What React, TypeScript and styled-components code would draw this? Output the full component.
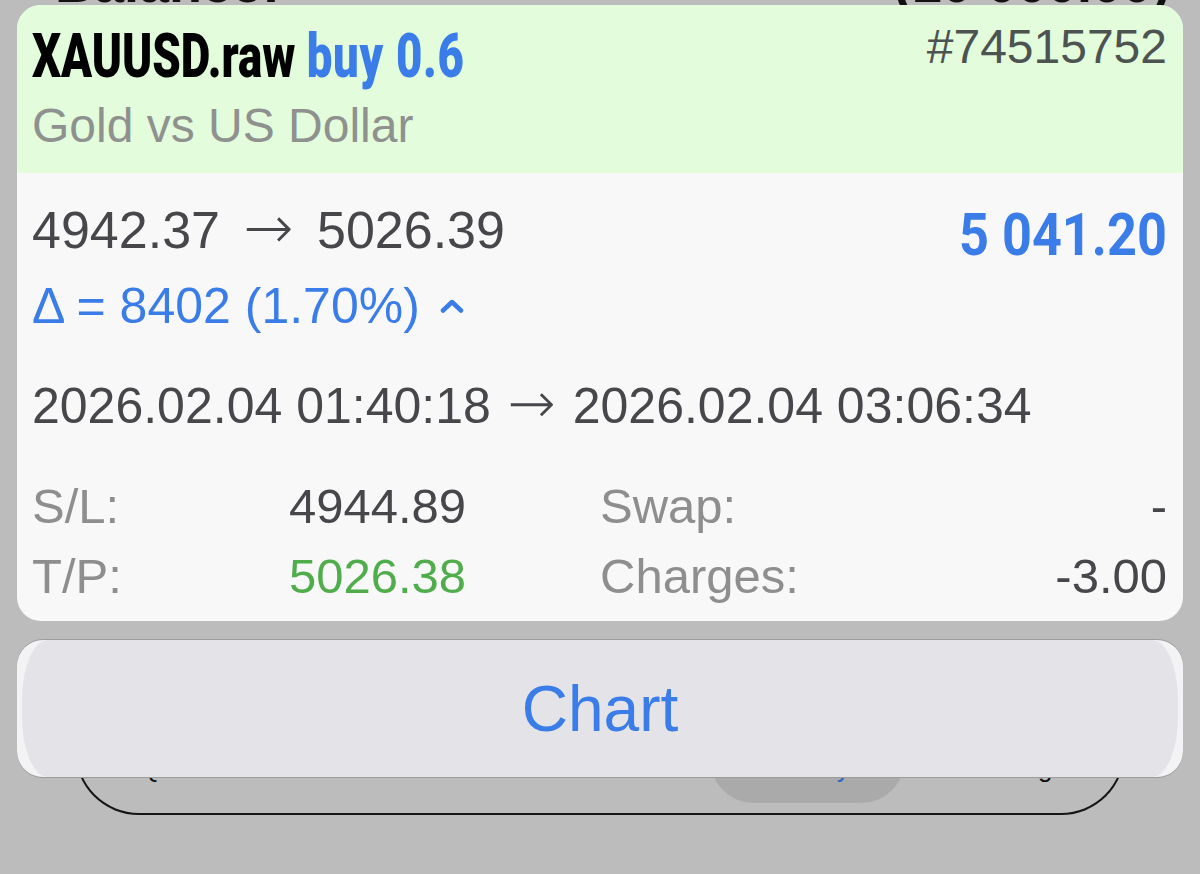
import styled, { createGlobalStyle } from 'styled-components';

const GlobalStyle = createGlobalStyle`
  html, body {
    margin: 0;
    padding: 0;
    background: #bcbcbc;
    font-family: "Liberation Sans", Arial, sans-serif;
  }
  #root {
    min-height: 874px;
  }
`;

const Page = styled.div`
  position: relative;
  width: 1200px;
  height: 874px;
  overflow: hidden;
  background: #bcbcbc;
`;

/* dimmed screen behind the sheet */
const Backdrop = styled.div`
  position: absolute;
  inset: 0;
  z-index: 0;
`;

const BackHeading = styled.div`
  position: absolute;
  top: -43px;
  left: 55px;
  right: 30px;
  display: flex;
  justify-content: space-between;
  font-family: "Liberation Sans", Arial, sans-serif;
  font-weight: 700;
  font-size: 54px;
  line-height: 52px;
  color: #111;
`;

const TabBar = styled.div`
  position: absolute;
  left: 75px;
  width: 1050px;
  top: 660px;
  height: 155px;
  box-sizing: border-box;
  border: 2px solid #151515;
  border-top: none;
  border-radius: 0 0 64px 64px;
  display: grid;
  grid-template-columns: repeat(5, 1fr);
  align-items: end;
  padding: 0 0 30px;
`;

const Tab = styled.div<{ $active?: boolean }>`
  position: relative;
  text-align: center;
  font-size: 26px;
  line-height: 30px;
  color: ${p => (p.$active ? '#2f66c4' : '#111')};
`;

const TabPill = styled.div`
  position: absolute;
  left: 710px;
  top: 700px;
  width: 195px;
  height: 103px;
  border-radius: 0 0 44px 44px;
  background: #aaaaaa;
`;

const Sheet = styled.div`
  position: relative;
  z-index: 1;
  padding: 5px 17px 0;
  display: flex;
  flex-direction: column;
`;

const Card = styled.div`
  border-radius: 24px;
  overflow: hidden;
  background: #f8f8f8;
`;

const Header = styled.div`
  background: #e2fcdc;
  padding: 16px 16px 19px 15px;
`;

const HeaderRow = styled.div`
  display: flex;
  justify-content: space-between;
  align-items: flex-start;
`;

const Title = styled.div`
  display: inline-block;
  font-family: Roboto, "Liberation Sans", sans-serif;
  font-weight: 900;
  font-size: 62px;
  line-height: 70px;
  color: #000;
  white-space: nowrap;
  transform: scaleX(0.735);
  transform-origin: left center;
`;

const Side = styled.span`
  letter-spacing: 1px;
  color: #3a7ce8;
`;

const Ticket = styled.div`
  font-size: 48px;
  line-height: 52px;
  color: #4d5351;
`;

const Subtitle = styled.div`
  margin-top: 7px;
  font-size: 48px;
  line-height: 56px;
  color: #8f918e;
`;

const Body = styled.div`
  padding: 27px 16px 10px 15px;
`;

const PriceRow = styled.div`
  display: flex;
  justify-content: space-between;
  align-items: flex-start;
  height: 60px;
`;

const Prices = styled.div`
  font-size: 52px;
  line-height: 60px;
  color: #47474b;
  white-space: nowrap;
`;

const Arrow = styled.span<{ $space: number }>`
  display: inline-block;
  margin: 0 ${p => p.$space}px;
  font-family: "DejaVu Sans", sans-serif;
  font-weight: 200;
  font-size: 1.15em;
  line-height: 0;
`;

const Profit = styled.div`
  margin-top: 3px;
  font-family: Roboto, "Liberation Sans", sans-serif;
  font-weight: 700;
  font-size: 60px;
  line-height: 64px;
  color: #3a7ce8;
  white-space: nowrap;
  transform: scaleX(0.87);
  transform-origin: right center;
`;

const Delta = styled.div`
  margin-top: 17px;
  display: flex;
  align-items: center;
  gap: 20px;
  font-size: 50px;
  line-height: 58px;
  color: #3a7ce8;
`;

const Dates = styled.div`
  margin-top: 42px;
  font-size: 50px;
  line-height: 58px;
  color: #47474b;
  white-space: nowrap;
`;

const Grid = styled.div`
  margin-top: 36px;
  display: grid;
  grid-template-columns: 434px 1fr;
  column-gap: 134px;
`;

const Cell = styled.div`
  display: flex;
  justify-content: space-between;
  font-size: 49px;
  line-height: 70px;
`;

const Label = styled.span`
  color: #8e8e8e;
`;

const Value = styled.span<{ $green?: boolean }>`
  color: ${p => (p.$green ? '#4fad4c' : '#47474b')};
`;

const ChartButton = styled.button`
  position: relative;
  margin-top: 19px;
  height: 137px;
  border: none;
  border-radius: 26px;
  background: #f3f3f5;
  box-shadow: 0 -1px 0 #9c9c9c, 0 1px 0 #9c9c9c;
  padding: 0;
  font-family: "Liberation Sans", Arial, sans-serif;
  font-size: 64px;
  color: #3a7ce8;
  cursor: pointer;
  overflow: hidden;

  &::before {
    content: "";
    position: absolute;
    inset: 0 5px;
    border-radius: 26px / 60px;
    background: #e4e4e8;
  }

  span {
    position: relative;
  }
`;

function Chevron() {
  return (
    <svg width="24" height="14" viewBox="0 0 24 14">
      <polyline
        points="3,11.5 12,3 21,11.5"
        fill="none"
        stroke="#3a7ce8"
        strokeWidth="4.5"
        strokeLinecap="round"
        strokeLinejoin="round"
      />
    </svg>
  );
}

export default function App() {
  return (
    <Page>
      <GlobalStyle />
      <Backdrop>
        <BackHeading>
          <span>Balance:</span>
          <span>(10 000.00)</span>
        </BackHeading>
        <TabPill />
        <TabBar>
          <Tab>Quotes</Tab>
          <Tab>Chart</Tab>
          <Tab>Trade</Tab>
          <Tab $active>History</Tab>
          <Tab>Settings</Tab>
        </TabBar>
      </Backdrop>

      <Sheet>
        <Card>
          <Header>
            <HeaderRow>
              <Title>
                XAUUSD.raw <Side>buy 0.6</Side>
              </Title>
              <Ticket>#74515752</Ticket>
            </HeaderRow>
            <Subtitle>Gold vs US Dollar</Subtitle>
          </Header>
          <Body>
            <PriceRow>
              <Prices>
                4942.37 <Arrow $space={9}>→</Arrow> 5026.39
              </Prices>
              <Profit>5 041.20</Profit>
            </PriceRow>
            <Delta>
              <span>Δ = 8402 (1.70%)</span>
              <Chevron />
            </Delta>
            <Dates>
              2026.02.04 01:40:18 <Arrow $space={3}>→</Arrow> 2026.02.04 03:06:34
            </Dates>
            <Grid>
              <Cell>
                <Label>S/L:</Label>
                <Value>4944.89</Value>
              </Cell>
              <Cell>
                <Label>Swap:</Label>
                <Value>-</Value>
              </Cell>
              <Cell>
                <Label>T/P:</Label>
                <Value $green>5026.38</Value>
              </Cell>
              <Cell>
                <Label>Charges:</Label>
                <Value>-3.00</Value>
              </Cell>
            </Grid>
          </Body>
        </Card>
        <ChartButton>
          <span>Chart</span>
        </ChartButton>
      </Sheet>
    </Page>
  );
}
